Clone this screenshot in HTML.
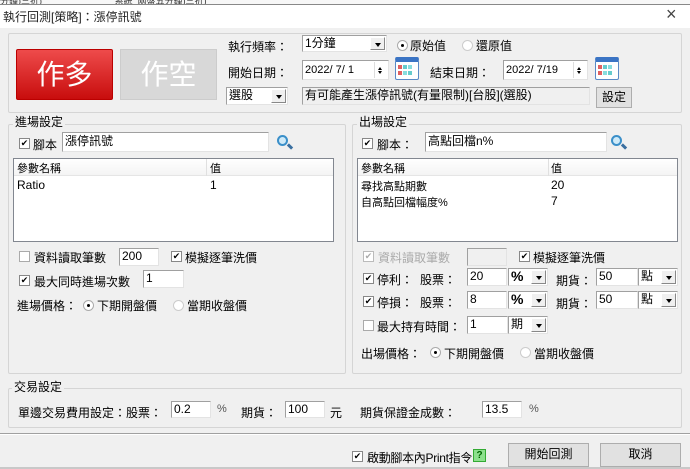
<!DOCTYPE html>
<html><head><meta charset="utf-8"><style>
*{box-sizing:border-box;margin:0;padding:0}
body{width:690px;height:469px;overflow:hidden;background:#f0f0f0;font-family:"Liberation Sans","Noto Sans CJK TC",sans-serif;font-size:12px;color:#000;position:relative}
.a{position:absolute;white-space:nowrap}
.grp{position:absolute;border:1px solid #d5d5d5;border-radius:2px}
.gl{position:absolute;background:#f0f0f0;padding:0 2px;font-size:12px;line-height:14px}
.inp{position:absolute;background:#fff;border:1px solid #a0a0a0;border-right-color:#e3e3e3;border-bottom-color:#e3e3e3;padding-left:2px;font-size:12px;line-height:14px}
.sel{position:absolute;background:#fff;border:1px solid #a0a0a0;border-right-color:#e3e3e3;border-bottom-color:#e3e3e3;padding-left:2px;line-height:14px}
.dd{position:absolute;right:1px;top:1px;bottom:1px;width:15px;background:#f0f0f0;border:1px solid #fff;border-right-color:#888;border-bottom-color:#888}
.dd:after{content:"";position:absolute;left:4px;top:5px;border:3px solid transparent;border-top:4px solid #000}
.cb{position:absolute;width:11px;height:11px;background:#fff;border:1px solid #888;font-size:9px;line-height:9px;text-align:center}
.rb{position:absolute;width:11px;height:11px;border-radius:50%;background:#fff;border:1px solid #aaa}
.rb.on:after{content:"";position:absolute;left:3px;top:3px;width:3px;height:3px;border-radius:50%;background:#000}
.btn{position:absolute;background:#e1e1e1;border:1px solid #adadad;text-align:center;font-size:12px}
.lv{position:absolute;background:#fff;border:1px solid #828790}
.lh{position:absolute;left:0;right:0;top:0;height:17px;border-bottom:1px solid #e5e5e5;background:linear-gradient(#fff,#f4f4f4)}
.cal{position:absolute;width:24px;height:23px;border:1px solid #5a8ac6;background:#fff;border-top:5px solid #3b74c4;border-radius:2px}
.cal i{position:absolute;width:4px;height:4px}
.spin{position:absolute;right:1px;top:1px;width:13px;bottom:1px;border-left:1px solid #ddd}
.spin:before{content:"";position:absolute;left:3px;top:3px;border:2px solid transparent;border-bottom:3px solid #000}
.spin:after{content:"";position:absolute;left:3px;bottom:2px;border:2px solid transparent;border-top:3px solid #000}
.mag{position:absolute;width:11px;height:11px;border:2px solid #3a8fc9;border-radius:50%;background:#cfeaf8}
.mag:after{content:"";position:absolute;left:8px;top:8px;width:6px;height:3px;background:#3a6fa0;transform:rotate(45deg)}
</style></head><body>
<div class="a" style="left:0;top:0;width:690px;height:5px;background:#f7f7f7;border-bottom:1px solid #888;overflow:hidden;font-size:9px;line-height:3px;color:#333">分鐘)三折)&nbsp;&nbsp;&nbsp;&nbsp;&nbsp;&nbsp;&nbsp;&nbsp;&nbsp;&nbsp;&nbsp;&nbsp;&nbsp;&nbsp;&nbsp;&nbsp;&nbsp;&nbsp;&nbsp;&nbsp;&nbsp;&nbsp;&nbsp;&nbsp;&nbsp;&nbsp;&nbsp;&nbsp;&nbsp;系統 &nbsp;兩盤五分鐘)三折)</div>
<div class="a" style="left:0;top:5px;width:690px;height:23px;background:#fff"></div>
<div class="a" style="left:3px;top:8px;font-size:12px;color:#222">執行回測[策略]：漲停訊號</div>
<div class="a" style="left:666px;top:4px;font-size:18px;color:#444;font-weight:100">×</div>

<div class="grp" style="left:8px;top:33px;width:674px;height:80px"></div>
<div class="a" style="left:16px;top:49px;width:97px;height:51px;background:linear-gradient(#ee4b4b,#c80d0d);border:1px solid #b00;border-radius:2px;color:#fff;font-size:28px;text-align:center;line-height:49px">作多</div>
<div class="a" style="left:120px;top:49px;width:97px;height:51px;background:#d8d8d8;border:1px solid #ccc;color:#fff;font-size:28px;text-align:center;line-height:49px">作空</div>

<div class="a" style="left:228px;top:38px">執行頻率：</div>
<div class="sel" style="left:302px;top:35px;width:85px;height:17px">1分鐘<div class="dd"></div></div>
<div class="rb on" style="left:397px;top:40px"></div><div class="a" style="left:410px;top:37px">原始值</div>
<div class="rb" style="left:462px;top:40px;border-color:#ccc"></div><div class="a" style="left:476px;top:37px">還原值</div>

<div class="a" style="left:228px;top:64px">開始日期：</div>
<div class="inp" style="left:302px;top:60px;width:87px;height:20px;padding-top:2px;font-size:11px">2022/ 7/ 1<div class="spin"></div></div>
<div class="cal" style="left:395px;top:57px"><i style="left:2px;top:3px;background:#e06060"></i><i style="left:7px;top:3px;background:#6cc"></i><i style="left:12px;top:3px;background:#8dd"></i><i style="left:2px;top:9px;background:#e06060"></i><i style="left:7px;top:9px;background:#8dd"></i><i style="left:12px;top:9px;background:#6cc"></i></div>
<div class="a" style="left:430px;top:64px">結束日期：</div>
<div class="inp" style="left:503px;top:60px;width:85px;height:20px;padding-top:2px;font-size:11px">2022/ 7/19<div class="spin"></div></div>
<div class="cal" style="left:595px;top:57px"><i style="left:2px;top:3px;background:#e06060"></i><i style="left:7px;top:3px;background:#6cc"></i><i style="left:12px;top:3px;background:#8dd"></i><i style="left:2px;top:9px;background:#e06060"></i><i style="left:7px;top:9px;background:#8dd"></i><i style="left:12px;top:9px;background:#6cc"></i></div>

<div class="sel" style="left:226px;top:87px;width:62px;height:18px">選股<div class="dd"></div></div>
<div class="inp" style="left:302px;top:87px;width:288px;height:18px;background:#f0f0f0;font-size:12px;line-height:15px">有可能產生漲停訊號(有量限制)[台股](選股)</div>
<div class="btn" style="left:596px;top:87px;width:36px;height:21px;line-height:19px">設定</div>

<div class="grp" style="left:8px;top:124px;width:338px;height:250px"></div>
<div class="gl" style="left:13px;top:115px">進場設定</div>
<div class="cb" style="left:19px;top:138px">✔</div><div class="a" style="left:33px;top:136px">腳本</div>
<div class="inp" style="left:62px;top:132px;width:207px;height:20px;line-height:17px">漲停訊號</div>
<div class="mag" style="left:277px;top:135px"></div>
<div class="lv" style="left:13px;top:158px;width:321px;height:84px"><div class="lh"></div>
<div class="a" style="left:192px;top:0;width:1px;height:17px;background:#e0e0e0"></div>
<div class="a" style="left:3px;top:1px;font-size:11px">參數名稱</div><div class="a" style="left:196px;top:1px;font-size:11px">值</div>
<div class="a" style="left:3px;top:19px">Ratio</div><div class="a" style="left:196px;top:19px">1</div></div>
<div class="cb" style="left:19px;top:251px;border-color:#aaa"></div><div class="a" style="left:34px;top:249px">資料讀取筆數</div>
<div class="inp" style="left:119px;top:248px;width:40px;height:18px">200</div>
<div class="cb" style="left:171px;top:251px">✔</div><div class="a" style="left:185px;top:249px">模擬逐筆洗價</div>
<div class="cb" style="left:19px;top:275px">✔</div><div class="a" style="left:34px;top:273px">最大同時進場次數</div>
<div class="inp" style="left:143px;top:270px;width:41px;height:18px">1</div>
<div class="a" style="left:17px;top:297px">進場價格：</div>
<div class="rb on" style="left:83px;top:300px"></div><div class="a" style="left:97px;top:297px">下期開盤價</div>
<div class="rb" style="left:173px;top:300px;border-color:#ccc"></div><div class="a" style="left:187px;top:297px">當期收盤價</div>

<div class="grp" style="left:352px;top:124px;width:330px;height:250px"></div>
<div class="gl" style="left:357px;top:115px">出場設定</div>
<div class="cb" style="left:362px;top:138px">✔</div><div class="a" style="left:377px;top:136px">腳本：</div>
<div class="inp" style="left:425px;top:132px;width:182px;height:20px;line-height:17px">高點回檔n%</div>
<div class="mag" style="left:611px;top:135px"></div>
<div class="lv" style="left:357px;top:158px;width:321px;height:84px"><div class="lh"></div>
<div class="a" style="left:190px;top:0;width:1px;height:17px;background:#e0e0e0"></div>
<div class="a" style="left:3px;top:1px;font-size:11px">參數名稱</div><div class="a" style="left:193px;top:1px;font-size:11px">值</div>
<div class="a" style="left:3px;top:19px;font-size:11px">尋找高點期數</div><div class="a" style="left:193px;top:19px">20</div>
<div class="a" style="left:3px;top:35px;font-size:11px">自高點回檔幅度%</div><div class="a" style="left:193px;top:35px">7</div></div>
<div class="cb" style="left:363px;top:251px;border-color:#bbb;color:#aaa">✔</div><div class="a" style="left:378px;top:249px;color:#aaa">資料讀取筆數</div>
<div class="inp" style="left:467px;top:248px;width:40px;height:18px;background:#f0f0f0"></div>
<div class="cb" style="left:519px;top:251px">✔</div><div class="a" style="left:533px;top:249px">模擬逐筆洗價</div>

<div class="cb" style="left:363px;top:273px">✔</div><div class="a" style="left:377px;top:271px">停利：</div><div class="a" style="left:420px;top:271px">股票：</div>
<div class="inp" style="left:467px;top:268px;width:40px;height:18px">20</div>
<div class="sel" style="left:508px;top:268px;width:40px;height:18px;font-size:14px;font-weight:bold">%<div class="dd"></div></div>
<div class="a" style="left:556px;top:272px">期貨：</div>
<div class="inp" style="left:596px;top:268px;width:42px;height:18px">50</div>
<div class="sel" style="left:638px;top:268px;width:40px;height:18px">點<div class="dd"></div></div>

<div class="cb" style="left:363px;top:296px">✔</div><div class="a" style="left:377px;top:294px">停損：</div><div class="a" style="left:420px;top:294px">股票：</div>
<div class="inp" style="left:467px;top:291px;width:40px;height:18px">8</div>
<div class="sel" style="left:508px;top:291px;width:40px;height:18px;font-size:14px;font-weight:bold">%<div class="dd"></div></div>
<div class="a" style="left:556px;top:295px">期貨：</div>
<div class="inp" style="left:596px;top:291px;width:42px;height:18px">50</div>
<div class="sel" style="left:638px;top:291px;width:40px;height:18px">點<div class="dd"></div></div>

<div class="cb" style="left:363px;top:320px;border-color:#aaa"></div><div class="a" style="left:377px;top:318px">最大持有時間：</div>
<div class="inp" style="left:467px;top:316px;width:41px;height:18px">1</div>
<div class="sel" style="left:508px;top:316px;width:40px;height:18px">期<div class="dd"></div></div>
<div class="a" style="left:361px;top:345px">出場價格：</div>
<div class="rb on" style="left:430px;top:347px"></div><div class="a" style="left:444px;top:345px">下期開盤價</div>
<div class="rb" style="left:520px;top:347px;border-color:#ccc"></div><div class="a" style="left:534px;top:345px">當期收盤價</div>

<div class="grp" style="left:8px;top:388px;width:674px;height:40px"></div>
<div class="gl" style="left:12px;top:380px">交易設定</div>
<div class="a" style="left:18px;top:404px">單邊交易費用設定：股票：</div>
<div class="inp" style="left:171px;top:401px;width:40px;height:17px">0.2</div>
<div class="a" style="left:217px;top:403px;font-size:11px;color:#555">%</div>
<div class="a" style="left:241px;top:404px">期貨：</div>
<div class="inp" style="left:285px;top:401px;width:40px;height:17px">100</div>
<div class="a" style="left:330px;top:404px">元</div>
<div class="a" style="left:360px;top:404px">期貨保證金成數：</div>
<div class="inp" style="left:482px;top:401px;width:40px;height:17px">13.5</div>
<div class="a" style="left:529px;top:403px;font-size:11px;color:#555">%</div>

<div class="a" style="left:0;top:433px;width:690px;height:1px;background:#a0a0a0"></div>
<div class="a" style="left:0;top:434px;width:690px;height:1px;background:#fff"></div>
<div class="cb" style="left:352px;top:451px">✔</div><div class="a" style="left:367px;top:449px;letter-spacing:-0.3px">啟動腳本內Print指令</div>
<div class="a" style="left:473px;top:449px;width:13px;height:13px;background:#8de08d;border:1px solid #3a3;font-size:10px;line-height:11px;text-align:center;color:#060;font-weight:bold">?</div>
<div class="btn" style="left:508px;top:443px;width:81px;height:24px;line-height:21px">開始回測</div>
<div class="btn" style="left:600px;top:443px;width:81px;height:24px;line-height:21px">取消</div>
<div class="a" style="left:0;top:467px;width:690px;height:2px;background:#c8c8c8"></div>
</body></html>
